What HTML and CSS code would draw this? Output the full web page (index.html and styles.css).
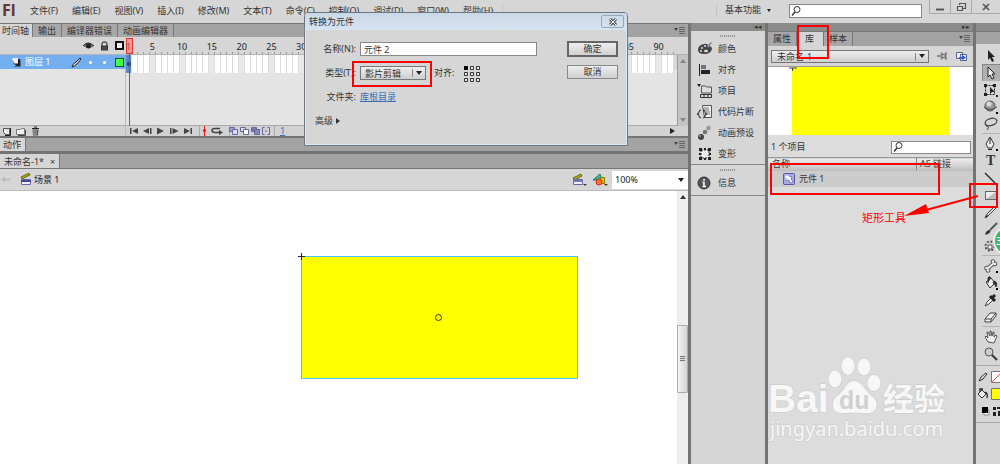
FILE: index.html
```html
<!DOCTYPE html>
<html lang="zh-CN">
<head>
<meta charset="utf-8">
<title>未命名-1</title>
<link rel="stylesheet" href="styles.css">
</head>
<body>
<div class="app">
  <header class="menubar">
    <span class="logo">Fl</span>
    <nav class="menus">
      <button>文件(F)</button><button>编辑(E)</button><button>视图(V)</button><button>插入(I)</button><button>修改(M)</button><button>文本(T)</button><button>命令(C)</button><button>控制(O)</button><button>调试(D)</button><button>窗口(W)</button><button>帮助(H)</button>
    </nav>
    <button class="workspace">基本功能 <span class="caret"></span></button>
    <label class="search">
      <svg width="12" height="12" viewBox="0 0 12 12"><circle cx="7" cy="4.500" r="3" fill="none" stroke="#333"/><path d="M5 7L2 10.500" stroke="#333" stroke-width="1.500"/></svg>
      <input type="text" aria-label="搜索帮助">
    </label>
    <div class="winbtns">
      <button aria-label="最小化"><svg width="12" height="12"><path d="M2 8.500h8" stroke="#555" stroke-width="2"/></svg></button>
      <button aria-label="还原"><svg width="12" height="12"><path d="M4.500 4V2.500h6v5H8M2.500 5.500h5v4h-5z" fill="none" stroke="#555" stroke-width="1.200"/></svg></button>
      <button aria-label="关闭"><svg width="12" height="12"><path d="M3 3l6 6M9 3l-6 6" stroke="#555" stroke-width="1.700"/></svg></button>
    </div>
  </header>

  <div class="work">
    <main class="main">
      <section class="timeline">
        <div class="tabs">
          <button class="tab on">时间轴</button><button class="tab">输出</button><button class="tab">编译器错误</button><button class="tab">动画编辑器</button>
          <span class="fill"></span>
          <svg class="panelmenu" width="12" height="8"><path d="M0 2h4L2 5z" fill="#444"/><path d="M5 1.500h6M5 3.500h6M5 5.500h6M5 7.500h6" stroke="#666"/></svg>
        </div>
        <div class="tl-row tl-head">
          <div class="layers">
            <svg class="eye" width="12" height="10"><path d="M0 5q5-6 11 0q-5 4-11 0z" fill="#777"/><path d="M0 5q5-6 11 0" fill="none" stroke="#222"/><circle cx="5.500" cy="5" r="2.500" fill="#222"/></svg>
            <svg class="lock" width="9" height="10"><path d="M2 5V3q0-2 2.500-2T7 3v2" fill="none" stroke="#555" stroke-width="1.400"/><rect x="1" y="4.500" width="7" height="5" fill="#333"/><path d="M2 6h5M2 8h5" stroke="#777" stroke-width=".6"/></svg>
            <span class="outline"></span>
          </div>
          <div class="frames" id="ruler"></div>
        </div>
        <div class="tl-row tl-layer">
          <div class="layers active">
            <svg class="sheet" width="9" height="9"><path d="M1 8.500h7.500V1L7 7z" fill="#222"/><path d="M1 1h7v7H5L1 5z" fill="#222"/><path d="M0 0h6v5.500H2z" fill="#eee"/></svg>
            <span class="lname">图层 1</span>
            <svg class="pen" width="11" height="11"><path d="M1 10q1-4 4-5L9 1l1 1-4 5q-2 2-5 3z" fill="#ddd" stroke="#222"/></svg>
            <i class="dot"></i><i class="dot"></i><span class="outline green"></span>
          </div>
          <div class="frames" id="cells"></div>
          <div class="vscroll"><span class="up"></span></div>
        </div>
        <div class="tl-row tl-empty">
          <div class="layers"></div><div class="frames"></div>
          <div class="vscroll end"><span class="down"></span></div>
        </div>
        <div class="tl-foot">
          <div class="layers">
            <svg width="9" height="9"><path d="M1.500 1.500h6v6h-4l-2-2z" fill="#eee" stroke="#555"/><path d="M8.500 1v7.500H3" stroke="#222" fill="none"/></svg>
            <svg width="10" height="9"><path d="M.5 2.500h4l1-1h3v6h-8z" fill="#eee" stroke="#777"/><path d="M2 8.500h7.500V3" fill="none" stroke="#444"/></svg>
            <svg width="9" height="10"><path d="M1 2.500h7M3 1h3" stroke="#222"/><path d="M1.500 3.500h6L7 9.500H2z" fill="#555"/><path d="M3 4v5M5 4v5" stroke="#ddd" stroke-width=".7"/></svg>
          </div>
          <svg class="play" width="164" height="10">
            <g fill="#444"><path d="M4 2h1.500v6H4zM12 2v6L6 5zM23 2v6l-6-3zM24 2h1.500v6H24zM31 1.500v7l7-3.500zM44 2h1.500v6H44zM46.500 2v6l6-3zM58 2v6l6-3zM64.500 2H66v6h-1.500z"/></g>
            <path d="M73.500 0v10M103.500 0v10M148.500 0v10" stroke="#aaa"/><path d="M78.500 0v10" stroke="#e11"/><circle cx="78.500" cy="4.500" r="1.500" fill="#e11"/>
            <path d="M94 2.500h-5q-3 0-3 2t3 2h5" fill="none" stroke="#444" stroke-width="1.500"/><path d="M93 4v5l4-2.500z" fill="#444"/>
            <g stroke="#6868a0"><path d="M103.500 1.500h5v4h-5z" fill="#9a9ad0"/><path d="M106.500 3.500h5v5h-5z" fill="#d8d8ff"/><path d="M114.500 1.500h5v4h-5z" fill="#ddd"/><path d="M117.500 3.500h5v5h-5z" fill="#fff"/><path d="M125.500 1.500h5v4h-5z" fill="#77a"/><path d="M128.500 3.500h5v5h-5z" fill="#88b"/><path d="M138.500 1.500h-2v7h2M141.500 1.500h2v7h-2M139 5h2" fill="none"/></g>
          </svg>
          <a href="#" class="frameno">1</a>
          <span class="fill"></span><span class="right"></span>
        </div>
        <div class="playhead"></div>
      </section>

      <div class="tabs gap">
        <button class="tab on">动作</button><span class="fill"></span>
        <svg class="panelmenu" width="12" height="8"><path d="M0 2h4L2 5z" fill="#444"/><path d="M5 1.500h6M5 3.500h6M5 5.500h6M5 7.500h6" stroke="#666"/></svg>
      </div>
      <div class="tabs doc"><button class="tab on">未命名-1*<span class="x">×</span></button></div>
      <div class="scenebar">
        <svg width="12" height="9"><path d="M1 4.500l4-3v2h5v2H5v2z" fill="#bbb"/></svg>
        <svg class="clap" width="12" height="13"><path d="M1 4L9 0l1 2-8 4z" fill="#aa0" stroke="#440" stroke-width=".7"/><path d="M1.500 6.500h9v5h-9z" fill="#eef" stroke="#66a"/><path d="M1 8h10" stroke="#449" stroke-width="2"/></svg>
        <span>场景 1</span><span class="fill"></span>
        <svg width="16" height="14"><path d="M1 5l8-4 1 2-7 4z" fill="#aa0" stroke="#440" stroke-width=".7"/><path d="M1.500 6.500h9v5h-9z" fill="#eef" stroke="#66a"/><path d="M1 8h10" stroke="#77b" stroke-width="2"/><path d="M11 11h4l-2 2z" fill="#440"/></svg>
        <svg class="shapes" width="18" height="14"><path d="M1 7l7-6 2 6z" fill="#3b9" stroke="#276"/><path d="M8.500 4.500h4v6h-4z" fill="#cc0" stroke="#870"/><circle cx="7" cy="9" r="3" fill="#f72" stroke="#d22"/><path d="M12 11h4l-2 2z" fill="#440"/></svg>
        <span class="zoom"><select aria-label="缩放"><option>100%</option></select><span class="caret"></span></span>
      </div>
      <section class="stage">
        <div class="canvas">
          <div class="shape"><svg class="cross" width="7" height="7"><path d="M0 3.500h7M3.500 0v7" stroke="#222"/></svg><i class="center"></i></div>
        </div>
        <div class="sscroll"><span class="up"></span><span class="thumb"></span></div>
      </section>
    </main>

    <aside class="dock">
      <div class="collapse">◂◂</div>
      <div class="group">
        <i class="grip"></i>
        <button><svg width="16" height="16"><path d="M1 9q0-5 6-6 4-1 4 2 4 0 4 3-1 5-8 5-6 0-6-4z" fill="#444"/><path d="M10 5l4-4 1 1-4 5z" fill="#888"/><g fill="#ddd"><circle cx="5" cy="7" r="1"/><circle cx="8" cy="5" r="1"/><circle cx="4" cy="10" r="1"/><ellipse cx="9" cy="10" rx="2" ry="1.300"/></g></svg>颜色</button>
        <button><svg width="16" height="16"><path d="M2.500 2v12" stroke="#222"/><path d="M4 3h5v4H4z" fill="#777"/><path d="M4 8h9v4H4z" fill="#222"/></svg>对齐</button>
        <button><svg width="16" height="16"><path d="M0 1h4L2 4z" fill="#222"/><path d="M4.500 4.500V3h4l1 1h5v6h-10z" fill="#ddd" stroke="#555"/><path d="M3.500 11.500h11v3h-11zM7 11v4M11 11v4" fill="#ddd" stroke="#333"/></svg>项目</button>
        <button><svg width="16" height="16"><path d="M5.500 1.500h9v12h-7z" fill="#eee" stroke="#555"/><path d="M7 4h5M7 6h5M9 8h4M9 10h4" stroke="#777"/><path d="M4 6Q2 6 2 8t-2 2q2 0 2 2t2 2M6 6q2 0 2 2t2 2q-2 0-2 2t-2 2" fill="none" stroke="#222"/></svg>代码片断</button>
        <button><svg width="16" height="16"><circle cx="4" cy="12" r="3" fill="#444"/><circle cx="8" cy="7" r="2.300" fill="#777"/><circle cx="11.500" cy="3" r="1.700" fill="#aaa" stroke="#555" stroke-width=".6"/><circle cx="3" cy="11" r="1" fill="#999"/></svg>动画预设</button>
        <button><svg width="16" height="16"><path d="M4 4h8v8H4z" fill="#eee" stroke="#222" stroke-dasharray="2 1"/><path d="M2 2h3v3H2zM11 2h3v3h-3zM2 11h3v3H2zM11 11h3v3h-3zM2 7h2v2H2zM12 7h2v2h-2zM7 2h2v2H7zM7 12h2v2H7z" fill="#222"/></svg>变形</button>
      </div>
      <div class="group">
        <i class="grip"></i>
        <button><svg width="16" height="16"><circle cx="7" cy="8" r="6" fill="#555" stroke="#333"/><path d="M7 4v2M5.500 7.500H7v4M5.500 11.500h3.500" stroke="#fff" stroke-width="1.500" fill="none"/></svg>信息</button>
      </div>
    </aside>

    <aside class="library">
      <div class="collapse">▸▸</div>
      <div class="tabs">
        <button class="tab">属性</button><button class="tab on lib">库<i class="mark mark-tab"></i></button><button class="tab">样本</button><span class="fill"></span>
        <svg class="panelmenu" width="12" height="8"><path d="M0 2h4L2 5z" fill="#444"/><path d="M5 1.500h6M5 3.500h6M5 5.500h6M5 7.500h6" stroke="#666"/></svg>
      </div>
      <div class="docsel">
        <span class="combo"><select aria-label="文档"><option>未命名-1</option></select><span class="caret"></span></span>
        <svg width="11" height="10"><path d="M0 5h4M4.500 1.500v7M4.500 3.500h4v3h-4M9 1v8" fill="none" stroke="#777" stroke-width="1.400"/></svg>
        <svg width="12" height="11"><path d="M.5 1.500h6v6h-6zM4.500 3.500h6v6h-6z" fill="#eef" stroke="#568"/><path d="M3 6.500h4" stroke="#36c"/><path d="M6 4l4 2.500L6 9z" fill="#25d"/></svg>
      </div>
      <div class="preview"><div><svg width="8" height="4"><path d="M0 1h8M3.500 1v3" stroke="#444"/></svg></div></div>
      <div class="count"><span>1 个项目</span>
        <label class="search small"><svg width="12" height="12" viewBox="0 0 12 12"><circle cx="7" cy="4.500" r="3" fill="none" stroke="#333"/><path d="M5 7L2 10.500" stroke="#333" stroke-width="1.500"/></svg><input type="text" aria-label="搜索库"></label>
      </div>
      <div class="items">
        <table>
          <thead><tr><th>名称</th><th class="as"><span>AS 链接</span></th></tr></thead>
          <tbody><tr><td><span class="item"><svg width="12" height="12"><rect x=".5" y=".5" width="11" height="11" rx="1" fill="#a9a9ee" stroke="#55a"/><circle cx="4" cy="4" r="1.700" fill="#fff"/><path d="M6 3l3 1-1 2 2 3-3 1-1-3-3 1" fill="#fff" stroke="#447" stroke-width=".6"/></svg>元件 1</span></td><td></td></tr></tbody>
        </table>
        <i class="mark mark-item"></i>
      </div>
      <div class="note">矩形工具</div>
      <svg class="arrow" width="76" height="24"><path d="M74 2L22 16" stroke="red" stroke-width="2"/><path d="M0 22L22 10l3 9z" fill="red"/></svg>
      <svg class="watermark" width="190" height="96">
        <g fill="#f7f7f7" stroke="#cfcfcf" stroke-width="1.500" paint-order="stroke">
          <text x="0" y="59" class="wm-bai">Bai</text>
          <ellipse cx="67" cy="26" rx="6.500" ry="8.500"/><ellipse cx="80" cy="13" rx="6.500" ry="9"/><ellipse cx="96" cy="14" rx="6.500" ry="8.500"/><ellipse cx="106" cy="30" rx="6.500" ry="8"/>
          <path d="M86 28q6 0 11 8 4 5 9 9 5 6 1 12-4 4-12 3-8-1-16 0-9 1-13-3-3-6 1-12 5-4 9-9 4-8 10-8z"/>
          <text x="115" y="57" class="wm-cn">经验</text>
          <text x="2" y="83" class="wm-url">jingyan.baidu.com</text>
        </g>
        <text x="71" y="56" class="wm-du">du</text>
      </svg>
    </aside>

    <aside class="tools">
      <div class="collapse"></div><div class="toolhead"></div>
      <div class="toollist">
        <button aria-label="选择"><svg width="16" height="16"><path d="M5 2v10l2-2 2 4 2-1-2-4h3z" fill="#222"/></svg></button>
        <button class="sel" aria-label="部分选取"><svg width="16" height="16"><path d="M5 2v10l2-2 2 4 2-1-2-4h3z" fill="#eee" stroke="#222"/></svg></button>
        <button aria-label="任意变形"><svg width="16" height="16"><path d="M2.500 3.500h9v9h-9z" fill="none" stroke="#222" stroke-dasharray="2 1"/><path d="M1 2h3v3H1zM1 11h3v3H1zM10 2h3v3h-3zM7 5v7l2-2h3zM13 13h2v2h-2z" fill="#222"/></svg></button>
        <button aria-label="3D 旋转"><svg width="16" height="16"><circle cx="7" cy="7" r="5" fill="#999" stroke="#555"/><circle cx="6" cy="5" r="2.500" fill="#ddd"/><path d="M1 8q6 5 13 0" fill="none" stroke="#444"/><path d="M13 13h2v2h-2z"/></svg></button>
        <button aria-label="套索"><svg width="16" height="16"><ellipse cx="8" cy="6" rx="6" ry="3.500" transform="rotate(-15 8 6)" fill="none" stroke="#444" stroke-width="1.300"/><path d="M3 8q-1 3 2 2 1 2-1 4" fill="none" stroke="#444"/></svg></button>
        <hr>
        <button aria-label="钢笔"><svg width="16" height="16"><path d="M7 1l4 7-2 4H5L3 8z" fill="#eee" stroke="#333"/><path d="M7 2v6M5 13.500h4" stroke="#222"/><path d="M13 13h2v2h-2z"/></svg></button>
        <button class="t" aria-label="文本">T</button>
        <button aria-label="线条"><svg width="16" height="16"><path d="M2 3l11 11" stroke="#222" stroke-width="1.300"/></svg></button>
        <button aria-label="矩形"><svg width="16" height="16"><rect x="2.500" y="4.500" width="11" height="8" fill="#bbb" stroke="#666"/><path d="M3 5h10L3 12z" fill="#eee"/></svg><i class="mark mark-tool"></i></button>
        <button aria-label="铅笔"><svg width="16" height="16"><path d="M2 14l2-4 8-8 1 2-8 8z" fill="#ddd" stroke="#444"/><path d="M2 14l2-3 1 1z"/></svg></button>
        <button aria-label="刷子"><svg width="16" height="16"><path d="M14 2L7 9" stroke="#555" stroke-width="2"/><path d="M2 14q1-5 5-5 2 3-5 5z" fill="#333"/></svg></button>
        <button aria-label="喷涂"><svg width="16" height="16"><circle cx="7" cy="8" r="4.500" fill="none" stroke="#555" stroke-width="2" stroke-dasharray="2 1.500"/><path d="M5 7h4v4H5z" fill="#eee" stroke="#555"/></svg></button>
        <hr>
        <button aria-label="骨骼"><svg width="16" height="16"><g fill="#555"><path d="M4 11l7-6" stroke="#555" stroke-width="4"/><circle cx="3.500" cy="10" r="2.300"/><circle cx="5" cy="12.500" r="2.300"/><circle cx="10" cy="3.500" r="2.300"/><circle cx="12" cy="6" r="2.300"/></g><g fill="#eee"><path d="M4 11l7-6" stroke="#eee" stroke-width="2"/><circle cx="3.500" cy="10" r="1.300"/><circle cx="5" cy="12.500" r="1.300"/><circle cx="10" cy="3.500" r="1.300"/><circle cx="12" cy="6" r="1.300"/></g><path d="M13 13h2v2h-2z"/></svg></button>
        <button aria-label="颜料桶"><svg width="16" height="16"><path d="M3 7l5-4 4 5-5 5z" fill="#eee" stroke="#333"/><path d="M5 8V3q1-3 3 0M11 6q4 1 2 6-1-4-3-4z" fill="#333" stroke="#333"/><path d="M13 13h2v2h-2z"/></svg></button>
        <button aria-label="滴管"><svg width="16" height="16"><path d="M2 14l2-4 4-4 2 2-4 4z" fill="#eee" stroke="#444"/><path d="M7 4l5 5M9 6l3-3" stroke="#222" stroke-width="3"/></svg></button>
        <button aria-label="橡皮擦"><svg width="16" height="16"><path d="M2 10l5-6h6l-5 6zM2 10v3h6v-3M8 13l5-6V4" fill="#eee" stroke="#444"/></svg></button>
        <hr>
        <button aria-label="手形"><svg width="16" height="16"><path d="M5 13L2 8l1-1 2 2-1-6h1l2 4V2h1l1 5 1-4h1v5l2-2 1 1-3 7z" fill="#eee" stroke="#555"/></svg></button>
        <button aria-label="缩放"><svg width="16" height="16"><circle cx="6" cy="6" r="4" fill="#ccc" stroke="#555"/><path d="M9 9l5 5" stroke="#333" stroke-width="2"/></svg></button>
        <hr class="wide">
        <button class="pair" aria-label="笔触颜色"><svg width="25" height="16"><path d="M3 12l2-4 5-4 1 1-4 5z" fill="#ddd" stroke="#333"/><path d="M15.500 2.500h12v11h-12z" fill="#fff" stroke="#777"/><path d="M16 13l10-10" stroke="#e44"/></svg></button>
        <button class="pair" aria-label="填充颜色"><svg width="25" height="16"><path d="M2 8l4-4 4 4-4 4z" fill="#eee" stroke="#333"/><path d="M4 6V3h3M9 6q3 1 2 6" fill="none" stroke="#222" stroke-width="1.300"/><path d="M15.500 2.500h12v11h-12z" fill="#ff0" stroke="#777"/></svg></button>
        <button class="pair" aria-label="黑白"><svg width="25" height="16"><path d="M8 7h5v5H8z" fill="#fff" stroke="#888"/><path d="M6 4h6v6H6z"/><path d="M17 4h3v3h-3zM17 9h3v4h-3zM22 8h3v5h-3zM21 4h4v2h-4z" fill="#222"/></svg></button>
        <hr class="wide">
      </div>
      <span class="badge">3</span>
    </aside>
  </div>

  <form class="dialog">
    <div class="title"><span>转换为元件</span><button type="button" aria-label="关闭"><svg width="10" height="8"><path d="M2 1l6 6M8 1L2 7" stroke="#555" stroke-width="3"/><path d="M2 1l6 6M8 1L2 7" stroke="#fff"/></svg></button></div>
    <div class="body">
      <div class="fields">
        <div class="field"><label for="nm">名称(N):</label><input id="nm" type="text" value="元件 2"></div>
        <div class="field"><label for="tp">类型(T):</label><span class="combo"><select id="tp"><option>影片剪辑</option></select><span class="caret"></span><i class="mark mark-type"></i></span>
          <span class="align">对齐:</span>
          <svg width="17" height="17"><g fill="#eee" stroke="#333"><path d="M6.500 1.500h3v3h-3zM12.500 1.500h3v3h-3zM.5 7.500h3v3h-3zM6.500 7.500h3v3h-3zM12.500 7.500h3v3h-3zM.5 13.500h3v3h-3zM6.500 13.500h3v3h-3zM12.500 13.500h3v3h-3z"/></g><path d="M0 1h4v4H0z"/></svg></div>
        <div class="field"><span class="lab">文件夹:</span><a href="#">库根目录</a></div>
        <div class="field"><button type="button" class="adv">高级 <span class="tri"></span></button></div>
      </div>
      <div class="acts"><button type="button" class="ok">确定</button><button type="button">取消</button></div>
    </div>
  </form>
</div>
<script src="timeline.js"></script>
</body>
</html>
```
FILE: styles.css
```css
* { box-sizing: border-box; }
body { margin: 0; font: 9px/12px "Noto Sans", "Noto Sans CJK SC", sans-serif; color: #333; background: #d6d6d6; }
button, input, select { font: inherit; color: inherit; margin: 0; padding: 0; border: 0; background: none; border-radius: 0; }
select { appearance: none; }
svg { display: block; flex: none; }
.app { position: relative; display: flex; flex-direction: column; min-height: 100vh; overflow: hidden; }
.fill { flex: 1; }
.caret { border: 3px solid transparent; border-top: 4px solid #222; border-bottom: 0; }
.mark { position: absolute; border: 2px solid #f00; z-index: 3; pointer-events: none; }

.menubar { display: flex; align-items: flex-start; height: 23px; background: #d6d6d6; }
.logo { width: 30px; padding-left: 2px; font: bold 16px/20px "Open Sans", sans-serif; color: #643535; }
.menus { display: flex; gap: 14px; padding-right: 9px; border-right: 1px solid #c4c4c4; margin-top: 4px; }
.menus button { height: 14px; white-space: nowrap; }
.workspace { display: flex; align-items: center; gap: 6px; margin-left: auto; margin-top: 4px; padding-left: 8px; border-left: 1px solid #c4c4c4; }
.workspace .caret { border-width: 3px 2px 0; }
.search { display: flex; align-items: center; width: 133px; height: 14px; margin: 4px 7px 0 18px; background: #fff; border: 1px solid #888; }
.search input { flex: 1; min-width: 0; height: 10px; }
.winbtns { display: flex; width: 71px; height: 14px; border: 1px solid #aaa; border-width: 0 0 1px 1px; }
.winbtns button { display: flex; align-items: center; justify-content: center; width: 21px; border-right: 1px solid #aaa; }
.winbtns button:last-child { flex: 1; border: 0; }

.work { flex: 1; display: flex; gap: 3px; background: #747474; }
.main { flex: 1; min-width: 0; display: flex; flex-direction: column; background: #d6d6d6; }
.tabs { display: flex; height: 14px; background: #a3a3a3; border-top: 1px solid #777; }
.tab { padding: 0 6px; border-right: 1px solid #777; background: #a8a8a8; white-space: nowrap; color: #333; }
.tab.on { background: #d6d6d6; }
.panelmenu { margin: 2px 2px 0 0; }
.timeline { position: relative; border-bottom: 2px solid #747474; }
.timeline .tab { padding: 0 5px; }
.timeline .tab:first-child { padding: 0 3px 0 2px; }
.tl-row { display: flex; }
.layers { display: flex; align-items: center; flex: none; width: 126px; border-right: 1px solid #bbb; }
.frames { flex: 1; min-width: 0; display: grid; grid-template-columns: repeat(92, 1fr); }
.tl-head { height: 18px; padding-right: 14px; background: #d6d6d6; border-bottom: 1px solid #b4b4b4; }
.tl-head .layers { justify-content: flex-end; gap: 5px; padding-right: 2px; border: 0; }
.outline { width: 9px; height: 9px; border: 2px solid #111; background: #eee; }
.tl-head .outline { margin-left: 1px; }
.outline.green { background: #4f4; border: 1px solid #152; }
.tick { position: relative; align-self: end; height: 2px; border-right: 1px solid #999; min-width: 0; }
.tick span { position: absolute; bottom: 1px; left: 50%; width: 20px; margin-left: -10px; text-align: center; color: #222; }
.tl-layer { height: 14px; }
.layers.active { background: #72aef0; color: #fff; padding: 0 2px 0 12px; border: 0; }
.lname { margin-left: 4px; flex: 1; }
.dot { width: 3px; height: 3px; border-radius: 50%; background: #fff; margin-left: 11px; }
.pen + .dot { margin-left: 7px; }
.active .outline { margin-left: 9px; }
.cell { min-width: 0; background: #fff; border-right: 1px solid #ddd; }
.cell.fifth { background: #e8e8e8; }
.cell.first { background: #5c8ac0; }
.cell.first::after { content: ""; display: block; width: 4px; height: 4px; margin: 7px 1px; border-radius: 50%; background: #235; }
.vscroll { width: 11px; margin-left: 3px; background: #c4c4c4; border-left: 1px solid #999; display: flex; justify-content: center; padding-top: 4px; }
.vscroll.end { align-items: flex-end; padding: 0 0 4px; }
.up { width: 0; height: 0; border: 3px solid transparent; border-bottom: 4px solid #888; border-top: 0; }
.down { width: 0; height: 0; border: 3px solid transparent; border-top: 4px solid #888; border-bottom: 0; }
.tl-empty { height: 57px; background: #e4e4e4; }
.tl-foot { display: flex; align-items: center; height: 10px; background: #d2d2d2; box-shadow: 0 -1px #aaa; }
.tl-foot .layers { gap: 5px; padding-left: 2px; }
.play { margin-right: -10px; }
.frameno, .dialog a { color: #3970b8; text-decoration: underline; }
.right { border: 3px solid transparent; border-left: 5px solid #222; border-right: 0; margin-right: 13px; }
.playhead { position: absolute; left: 126px; top: 15px; width: 7px; height: 16px; border: 1px solid #d33; background: #f668; }
.playhead::after { content: ""; position: absolute; left: 2px; top: 15px; width: 1px; height: 72px; background: #d33; }
.tabs.gap { height: 16px; border-top: 0; border-bottom: 3px solid #747474; }
.tabs.gap .tab { padding: 0 4px 0 3px; }
.tabs.doc { height: 15px; border-top: 0; border-bottom: 1px solid #777; }
.doc .tab { padding: 2px 4px 0; line-height: 12px; }
.x { margin-left: 6px; }
.scenebar { display: flex; align-items: center; height: 22px; border-bottom: 1px solid #bbb; color: #222; }
.clap { margin: 0 2px 0 8px; }
.shapes { margin: 0 2px 0 4px; }
.zoom, .combo { position: relative; display: flex; align-items: center; }
.zoom { width: 76px; height: 18px; background: #fff; padding-right: 4px; }
.zoom select { flex: 1; padding-left: 3px; }
.stage { flex: 1; display: flex; background: #fff; }
.canvas { position: relative; flex: 1; }
.shape { position: absolute; left: 301px; top: 65px; width: 277px; height: 123px; background: #ff0 padding-box; border: 1px solid #4bc3f5; }
.cross { position: absolute; left: -4px; top: -4px; }
.center { position: absolute; left: 133px; top: 57px; width: 7px; height: 7px; border: 1px solid #333; border-radius: 50%; }
.sscroll { width: 11px; background: #eee; display: flex; flex-direction: column; align-items: center; padding-top: 4px; }
.sscroll .up { border-bottom-color: #333; }
.thumb { width: 11px; height: 68px; margin-top: 126px; border: 1px solid #aaa; border-radius: 1px; background: repeating-linear-gradient(#777 0 1px, #ddd 1px 2px) center / 5px 6px no-repeat, linear-gradient(90deg, #f5f5f5, #d4d4d8); }

.collapse { height: 8px; background: #8b8b8b; color: #333; font-size: 7px; line-height: 8px; text-align: right; padding-right: 3px; overflow: hidden; }
.dock { width: 74px; background: #d6d6d6; }
.group { display: flex; flex-direction: column; align-items: stretch; padding-top: 4px; border-bottom: 1px solid #888; }
.group:last-child { padding-bottom: 2px; }
.grip { width: 15px; height: 2px; margin: 0 0 1px 29px; background: repeating-linear-gradient(90deg, #999 0 1px, #ccc 1px 2px); }
.group button { display: flex; align-items: center; gap: 5px; height: 21px; padding-left: 6px; }

.library { position: relative; width: 205px; background: #dcdcdc; display: flex; flex-direction: column; }
.library .tabs { height: 15px; }
.library .tab { padding: 0 5px; }
.library .lib { position: relative; padding: 0 9px 0 8px; }
.mark-tab { left: 0; top: -7px; width: 32px; height: 34px; }
.panelmenu { align-self: flex-start; }
.docsel { display: flex; align-items: center; height: 20px; padding: 0 5px 0 3px; gap: 8px; background: #d6d6d6; }
.combo { height: 13px; background: linear-gradient(#eee, #cfcfcf); border: 1px solid #777; padding-right: 3px; }
.docsel .combo { flex: 1; }
.combo select { flex: 1; min-width: 0; height: 11px; line-height: 11px; padding-left: 5px; }
.combo .caret { margin-left: 3px; }
.combo::after { content: ""; position: absolute; right: 12px; top: 2px; width: 1px; height: 8px; background: #888; }
.preview { height: 69px; padding: 0 24px; background: #fff; border-top: 1px solid #999; }
.preview div { height: 100%; background: #ff0; }
.preview svg { margin-left: -3px; }
.count { display: flex; justify-content: space-between; align-items: center; height: 22px; padding: 2px 2px 0 3px; }
.search.small { width: 80px; height: 13px; margin: 0; }
.items { position: relative; }
table { width: 100%; border-collapse: collapse; }
th { height: 13px; padding: 0 4px; font-weight: normal; text-align: left; line-height: 12px; background: linear-gradient(#eee, #bbb); border-top: 1px solid #999; }
th.as { width: 61px; }
th.as span { border-left: 1px solid #888; padding-left: 3px; }
td { height: 16px; padding: 0; background: #ccc; }
.item { display: flex; align-items: center; gap: 4px; padding-left: 15px; }
.mark-item { left: 2px; top: 6px; width: 170px; height: 32px; }
.note { position: absolute; left: 94px; top: 188px; color: #f00; font-size: 11px; line-height: 14px; }
.arrow { position: absolute; left: 136px; top: 171px; z-index: 4; }
.watermark { position: absolute; left: 0; top: 330px; }
.wm-bai { font: bold 39px "Liberation Sans", sans-serif; }
.wm-cn { font: bold 31px "Noto Sans CJK SC", sans-serif; }
.wm-url { font: 20px "Noto Sans", sans-serif; }
.wm-du { font: bold 25px "Liberation Sans", sans-serif; fill: #d0d0d0; }

.tools { position: relative; width: 24px; background: #d6d6d6; }
.toolhead { height: 13px; background: #a3a3a3; border-top: 1px solid #777; }
.toollist { display: flex; flex-direction: column; padding-top: 3px; }
.toollist button { position: relative; display: flex; align-items: center; height: 17px; padding-left: 7px; }
.toollist .pair { padding-left: 0; }
.toollist .sel { background: #b0b0b0; box-shadow: inset 1px 1px #888; margin-left: 6px; padding-left: 1px; }
.toollist .t { font: bold 14px/16px "Liberation Serif", serif; padding-left: 10px; }
.toollist hr { width: 18px; height: 1px; margin: 1px 0 1px 6px; border: 0; background: #b4b4b4; }
.toollist hr.wide { width: 100%; margin: 3px 0 2px; background: #aaa; }
.mark-tool { left: -7px; top: -3px; width: 29px; height: 25px; }
.badge { position: absolute; left: 17px; top: 203px; width: 30px; height: 30px; border: 2px solid #eee; border-radius: 50%; background: #3cb95c; color: #fff; font-size: 10px; line-height: 26px; padding-left: 1px; }

.dialog { position: absolute; left: 304px; top: 12px; width: 324px; height: 134px; background: #d6d6d6; border: 1px solid #6f7780; border-radius: 4px 4px 0 0; box-shadow: inset 0 0 0 1px #dbe8f5; z-index: 5; }
.title { display: flex; justify-content: space-between; height: 17px; padding: 2px 3px 0 4px; line-height: 14px; background: linear-gradient(#c9d8e8, #d8e4f0); border-radius: 3px 3px 0 0; }
.title button { display: flex; align-items: center; justify-content: center; width: 23px; height: 13px; border: 1px solid #98a8ba; border-radius: 2px; }
.body { display: flex; justify-content: space-between; padding: 7px 9px 0 10px; }
.field { display: flex; align-items: center; height: 24px; }
.field label, .lab { width: 41px; margin-right: 4px; text-align: right; white-space: nowrap; }
.field input { width: 177px; height: 14px; padding-left: 3px; background: #fff; border: 1px solid #888; }
.field .combo { width: 66px; height: 14px; }
.field .combo select { padding-left: 4px; }
.mark-type { left: -9px; top: -6px; width: 80px; height: 26px; }
.align { margin: 0 10px 0 8px; }
.adv { display: flex; align-items: center; gap: 3px; }
.tri { border: 3px solid transparent; border-left: 4px solid #333; border-right: 0; }
.acts { display: flex; flex-direction: column; gap: 8px; width: 51px; padding-top: 4px; }
.acts button { height: 14px; line-height: 12px; border: 1px solid #888; background: linear-gradient(#eee, #d0d0d0); }
.acts .ok { height: 16px; border: 2px solid #666; }
```
FILE: timeline.js
```js
const ruler = document.getElementById("ruler");
const cells = document.getElementById("cells");
for (let n = 1; n <= 92; n++) {
  const tick = document.createElement("div");
  tick.className = "tick";
  if (n === 1 || n % 5 === 0) {
    const label = document.createElement("span");
    label.textContent = n;
    tick.append(label);
  }
  ruler.append(tick);
  const cell = document.createElement("div");
  cell.className = "cell" + (n === 1 ? " first" : n % 5 === 0 ? " fifth" : "");
  cells.append(cell);
}
```
